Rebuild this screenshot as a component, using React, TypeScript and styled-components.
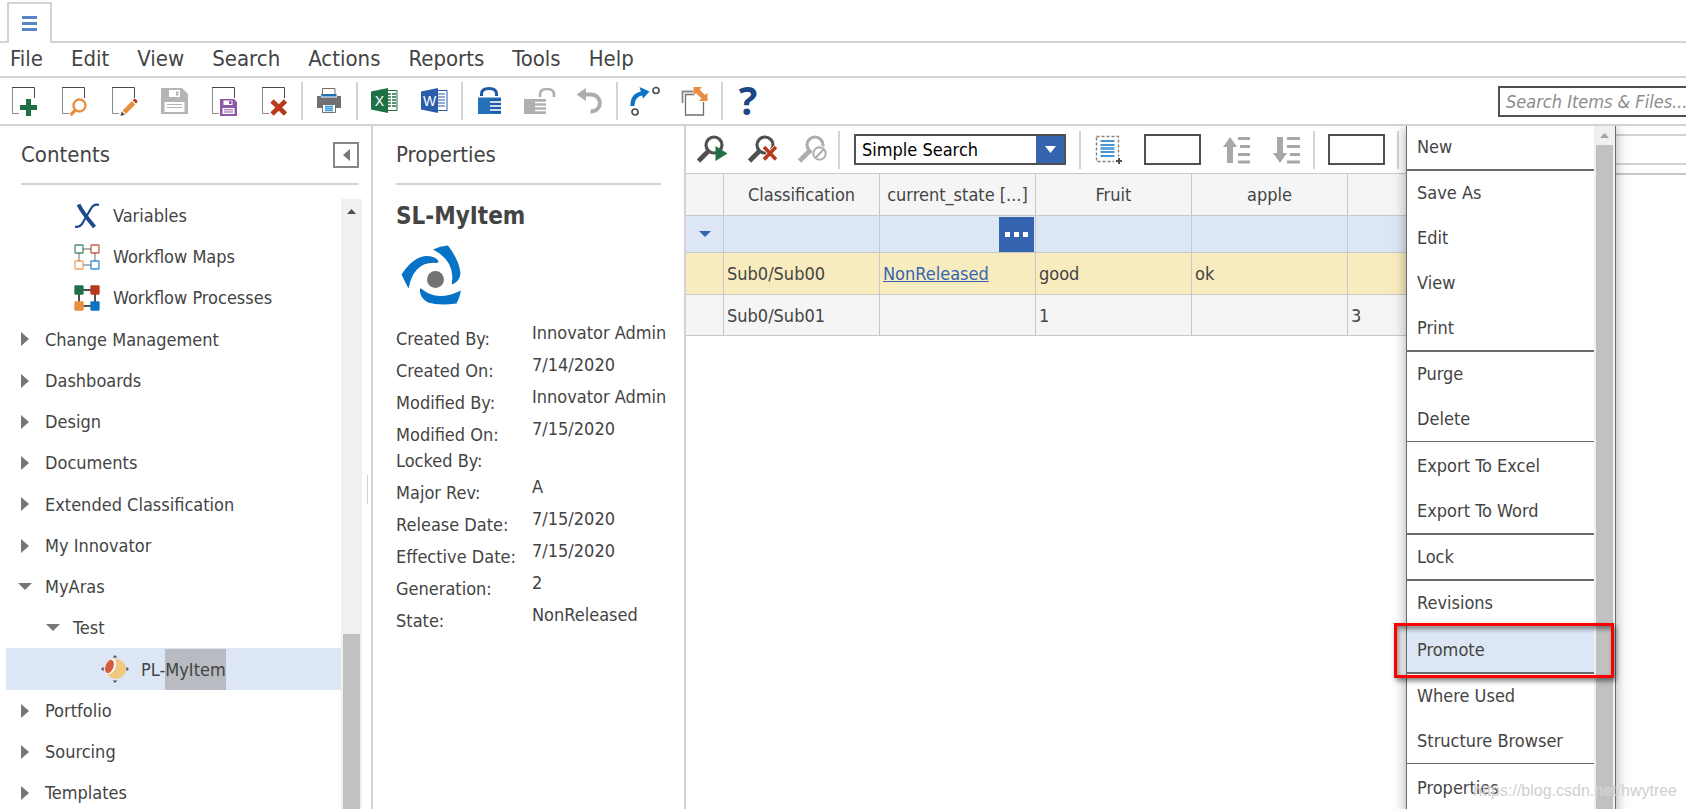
import React from "react";
import styled, { createGlobalStyle } from "styled-components";

const text = "#444444";
const line = "#d3d3d3";
const cellLine = "#c8c8c8";
const blue = "#3565b0";

const GlobalStyle = createGlobalStyle`
  *, *::before, *::after { box-sizing: border-box; }
  html, body { margin: 0; padding: 0; overflow: hidden; }
  body, button, input, select {
    font-family: "DejaVu Sans Condensed", "DejaVu Sans", sans-serif;
    font-size: 18px;
    color: ${text};
  }
  button { border: 0; padding: 0; background: transparent; cursor: pointer; }
  svg { display: block; flex: none; }
`;

const Page = styled.div`
  position: relative;
  display: flex;
  flex-direction: column;
  height: 100vh;
  overflow: hidden;
  background: #fff;
`;

/* ---------- Tab strip, menu bar, main toolbar ---------- */

const TabStrip = styled.div`
  display: flex;
  flex: none;
  height: 43px;
  padding-top: 2px;
`;

const TabEdge = styled.div<{ $grow?: boolean }>`
  flex: ${(p) => (p.$grow ? "1" : "0 0 7px")};
  border-bottom: 2px solid ${line};
`;

const Tab = styled.button`
  display: flex;
  align-items: center;
  justify-content: center;
  width: 45px;
  border: 2px solid ${line};
  border-bottom: 0;
`;

const MenuBar = styled.nav`
  display: flex;
  flex: none;
  height: 35px;
  padding: 0 0 2px;
  border-bottom: 2px solid ${line};
`;

const MenuButton = styled.button`
  padding: 0 18px 0 10px;
  font-size: 22px;
  line-height: 31px;
`;

const Toolbar = styled.div`
  display: flex;
  flex: none;
  align-items: center;
  height: 48px;
  overflow: hidden;
  border-bottom: 2px solid ${line};
`;

const ToolButton = styled.button`
  display: flex;
  flex: none;
  align-items: center;
  justify-content: center;
  width: 50px;
  height: 40px;
`;

const Divider = styled.span`
  flex: none;
  width: 2px;
  height: 38px;
  margin: 0 2px 0 1px;
  background: ${line};
`;

const SearchBox = styled.input`
  flex: none;
  width: 208px;
  height: 31px;
  margin: 0 -20px 0 auto;
  padding: 0 6px;
  border: 2px solid #505050;
  outline: 0;
  font-style: italic;
  background: #fff;
  &::placeholder { color: #8c8c8c; opacity: 1; }
`;

/* ---------- Panels ---------- */

const Main = styled.main`
  position: relative;
  display: flex;
  flex: 1;
  min-height: 0;
  overflow: hidden;
`;

const ContentsPanel = styled.aside`
  display: flex;
  flex: 0 0 373px;
  border-right: 2px solid ${line};
`;

const ContentsBody = styled.div`
  display: flex;
  flex: 1;
  flex-direction: column;
`;

const Splitter = styled.div`
  flex: 0 0 4px;
  padding-top: 349px;
  &::before {
    content: "";
    display: block;
    width: 1px;
    height: 29px;
    background: ${line};
  }
`;

const PanelHeader = styled.header<{ $left: number; $right: number }>`
  display: flex;
  flex: none;
  align-items: center;
  justify-content: space-between;
  height: 59px;
  margin: 0 ${(p) => p.$right}px 0 ${(p) => p.$left}px;
  border-bottom: 2px solid ${line};
`;

const PanelTitle = styled.h2`
  margin: 0;
  font-size: 22px;
  font-weight: 400;
  line-height: 30px;
`;

const CollapseButton = styled.button`
  display: flex;
  align-items: center;
  justify-content: center;
  width: 26px;
  height: 26px;
  border: 2px solid #878787;
`;

const TreeArea = styled.div`
  display: flex;
  flex: 1;
  min-height: 0;
  padding: 0 5px 0 6px;
`;

const Tree = styled.ul`
  flex: 1;
  margin: 10px 0 0;
  padding: 0;
  list-style: none;
`;

const TreeRow = styled.li<{ $depth: number; $selected?: boolean }>`
  display: flex;
  align-items: center;
  gap: 13px;
  height: 41px;
  padding-left: ${(p) => 12 + p.$depth * 28}px;
  line-height: 41px;
  white-space: nowrap;
  background: ${(p) => (p.$selected ? "#dde6f5" : "transparent")};

  &:nth-child(4n) { height: 42px; }
`;

const Toggle = styled.button`
  display: flex;
  flex: none;
  align-items: center;
  justify-content: center;
  width: 14px;
  height: 14px;
`;

const TreeIcon = styled.span`
  display: flex;
  flex: none;
  justify-content: center;
  width: 26px;
`;

const Found = styled.mark`
  display: inline-block;
  height: 41px;
  color: ${text};
  background: #b8bbc2;
`;

const ScrollTrack = styled.div<{ $top?: number }>`
  display: flex;
  flex: 0 0 21px;
  flex-direction: column;
  align-items: center;
  width: 21px;
  margin-top: ${(p) => p.$top ?? 0}px;
  background: #f0f0f0;
`;

const ScrollArrow = styled.span<{ $height: number }>`
  display: flex;
  flex: none;
  align-items: center;
  height: ${(p) => p.$height}px;
`;

const ScrollThumb = styled.span<{ $before?: number }>`
  flex: 1;
  width: 17px;
  margin-top: ${(p) => p.$before ?? 0}px;
  background: #c1c1c1;
`;

const PropertiesPanel = styled.section`
  flex: 0 0 313px;
  border-right: 2px solid ${line};
`;

const ItemTitle = styled.h1`
  margin: 16px 0 0 23px;
  font-size: 24px;
  font-weight: 700;
  line-height: 30px;
`;

const ItemLogo = styled.div`
  padding: 14px 0 15px 28px;
`;

const PropertyList = styled.dl`
  margin: 0 0 0 23px;
  line-height: 26px;
  white-space: nowrap;
`;

const PropertyRow = styled.div<{ $empty: boolean }>`
  display: flex;
  height: ${(p) => (p.$empty ? 26 : 32)}px;
`;

const PropertyName = styled.dt`
  align-self: flex-end;
  width: 136px;
`;

const PropertyValue = styled.dd`
  margin: 0;
`;

/* ---------- Grid area ---------- */

const GridPanel = styled.section`
  flex: 1;
  min-width: 0;
  overflow: hidden;
`;

const GridToolbar = styled.div`
  display: flex;
  align-items: center;
  height: 49px;
  padding-left: 1px;
  border-bottom: 2px solid ${cellLine};
`;

const SelectBox = styled.div`
  display: grid;
  flex: none;
  grid-template-columns: 1fr 28px;
  width: 212px;
  height: 31px;
  margin: 0 12px;
  border: 2px solid #505050;
`;

const SearchSelect = styled.select`
  grid-area: 1 / 1 / 2 / 3;
  appearance: none;
  padding: 0 6px;
  border: 0;
  outline: 0;
  color: #000;
  background: #fff;
`;

const SelectArrow = styled.span`
  display: flex;
  grid-area: 1 / 2 / 2 / 3;
  align-items: center;
  justify-content: center;
  pointer-events: none;
  background: ${blue};
`;

const SmallInput = styled.input`
  flex: none;
  width: 57px;
  height: 31px;
  margin: 0 11px;
  padding: 0 4px;
  border: 2px solid #505050;
  outline: 0;
`;

const ViewBar = styled.div`
  flex: 1;
  height: 31px;
  margin-left: 30px;
  border: solid ${line};
  border-width: 2px 0;
`;

const Grid = styled.table`
  position: relative;
  width: 818px;
  margin-top: -1px;
  table-layout: fixed;
  border-spacing: 0;
  color: ${text};
`;

const HeadCell = styled.th<{ $narrow?: boolean }>`
  width: ${(p) => (p.$narrow ? 38 : 156)}px;
  height: 42px;
  padding: 0;
  border: solid ${cellLine};
  border-width: 0 1px 1px 0;
  font-weight: 400;
  white-space: nowrap;
  background: #f5f5f5;
`;

const rowTones = {
  filter: { height: 37, color: "#dde6f5" },
  active: { height: 42, color: "#f8ecbf" },
  plain: { height: 41, color: "#f5f5f5" },
};

const Row = styled.tr<{ $tone: keyof typeof rowTones }>`
  height: ${(p) => rowTones[p.$tone].height}px;
  background: ${(p) => rowTones[p.$tone].color};
`;

const Cell = styled.td`
  padding: 0 0 0 3px;
  border: solid ${cellLine};
  border-width: 0 1px 1px 0;
`;

const FilterCell = styled.td`
  padding: 0;
  border: solid ${cellLine};
  border-width: 0 1px 1px 0;
`;

const FilterBody = styled.div`
  display: flex;
  height: 35px;
  padding-right: 1px;
`;

const FilterToggle = styled.button`
  display: flex;
  align-items: center;
  justify-content: center;
  width: 100%;
  height: 35px;
`;

const FilterInput = styled.input`
  flex: 1;
  min-width: 0;
  padding: 0 3px;
  border: 0;
  outline: 0;
  background: transparent;
`;

const PickButton = styled.button`
  display: flex;
  align-items: center;
  justify-content: center;
  width: 35px;
  height: 35px;
  background: ${blue};
`;

const StateLink = styled.a`
  color: ${blue};
  text-decoration: underline;
`;

/* ---------- Context menu ---------- */

const ContextMenu = styled.div`
  position: absolute;
  top: -1px;
  bottom: -8px;
  left: 1406px;
  display: flex;
  width: 210px;
  border: 1px solid #6b6b6b;
  background: #fff;
  box-shadow: 0 2px 12px rgba(0, 0, 0, 0.35);
`;

const ContextList = styled.ul`
  flex: 1;
  margin: -2px 0 0;
  padding: 0;
  list-style: none;
`;

const ContextItem = styled.li<{ $active?: boolean }>`
  position: ${(p) => (p.$active ? "relative" : "static")};
  background: ${(p) => (p.$active ? "#dde6f5" : "#fff")};
`;

const ContextButton = styled.button`
  width: 100%;
  padding-left: 10px;
  text-align: left;
  line-height: 45px;
`;

const ContextRule = styled.li<{ $thick?: boolean }>`
  position: relative;
  height: ${(p) => (p.$thick ? 2 : 1)}px;
  margin-bottom: ${(p) => (p.$thick ? -1 : 1)}px;
  background: #6b6b6b;
`;

const RedFrame = styled.span`
  position: absolute;
  z-index: 1;
  top: -4px;
  left: -13px;
  width: 220px;
  height: 55px;
  border: 3px solid #fb0000;
  box-shadow: 2px 3px 5px rgba(0, 0, 0, 0.5), inset 2px 3px 5px rgba(0, 0, 0, 0.45);
  pointer-events: none;
`;

const Watermark = styled.span`
  position: absolute;
  right: 9px;
  bottom: 8px;
  font-family: "Liberation Sans", Arial, sans-serif;
  font-size: 16px;
  line-height: 20px;
  color: rgba(190, 190, 190, 0.75);
  text-shadow: 0 0 1px rgba(255, 255, 255, 0.9);
  pointer-events: none;
`;

/* ---------- Icons ---------- */

const PageShape = () => (
  <g fill="none">
    <path d="M9 28.5H2.5V2" stroke="#8a8a8a" />
    <path d="M2 2.5H24.5V13" stroke="#4a4a4a" />
  </g>
);

const Tool = ({ children }: { children: React.ReactNode }) => (
  <svg width="30" height="32" viewBox="0 0 30 32" aria-hidden="true">
    {children}
  </svg>
);

const NewIcon = () => (
  <Tool>
    <PageShape />
    <path d="M16 14h5v6h6v5h-6v6h-5v-6h-6v-5h6z" fill="#1f7145" />
  </Tool>
);

const FindIcon = () => (
  <Tool>
    <PageShape />
    <circle cx="19.5" cy="20.5" r="6" fill="#fff" stroke="#e88f3f" strokeWidth="2.4" />
    <path d="M15.5 25l-5 5" stroke="#e88f3f" strokeWidth="3.2" />
  </Tool>
);

const EditIcon = () => (
  <Tool>
    <PageShape />
    <path d="M12.5 25.5L22 16l3.4 3.4-9.5 9.5z" fill="#e88f3f" />
    <path d="M22.8 15.2l1-1q1.2-1 2.3.2l.9.9q1 1.1 0 2.2l-1 1.1z" fill="#b8391b" />
    <path d="M11.6 26.4l3.4 3.4-4.6 1.2z" fill="#555" />
  </Tool>
);

const SaveIcon = () => (
  <Tool>
    <path d="M1 3h21l6 6v20H1z" fill="#b5b5b5" />
    <path d="M7 5h13v7H7z" fill="#fff" />
    <path d="M16 6.5h2.5v4H16z" fill="#b5b5b5" />
    <path d="M7 5h2v7H7z" fill="#b5b5b5" />
    <path d="M4.5 17h20v10h-20z" fill="#fff" />
    <path d="M7 19.5h15M7 22.5h15" stroke="#b5b5b5" />
  </Tool>
);

const SaveCloseIcon = () => (
  <Tool>
    <PageShape />
    <path d="M10 14h14l3 3v14H10z" fill="#8e58a8" />
    <path d="M13.5 15.5h9V20h-9z" fill="#fff" />
    <path d="M19 16h2.5v3H19z" fill="#8e58a8" />
    <path d="M12.5 23h12v6h-12z" fill="#fff" />
    <path d="M14 24.8h9M14 27h9" stroke="#8e58a8" />
  </Tool>
);

const DeleteIcon = () => (
  <Tool>
    <PageShape />
    <path d="M12 16l13.5 13M25.5 16L12 29" stroke="#b8391b" strokeWidth="4.6" />
  </Tool>
);

const PrintIcon = () => (
  <Tool>
    <path d="M7.5 9V3.5H20V9" fill="#fff" stroke="#6f6f6f" />
    <path d="M2 11h4V9h15.500v2H26v12H2z" fill="#707070" />
    <path d="M6 10h16v2.500H6z" fill="#fff" />
    <path d="M6.500 9.500h15v2h-15z" fill="#0a73c6" />
    <path d="M7.500 19.500h13v8h-13z" fill="#fff" stroke="#6f6f6f" />
    <path d="M10 21.500h8M10 23.500h8M10 25.500h8" stroke="#3a96da" strokeWidth="1.4" />
  </Tool>
);

const OfficeIcon = ({ letter, color }: { letter: string; color: string }) => (
  <Tool>
    <path d="M18 5.5h9v20h-9" fill="#fff" stroke={color} />
    {letter === "X" ? (
      <path
        d="M18 9h3M22 9h4M18 12h3M22 12h4M18 15h3M22 15h4M18 18h3M22 18h4M18 21h3M22 21h4"
        stroke={color}
        strokeWidth="1.6"
      />
    ) : (
      <path d="M18 9h7M18 12h7M18 15h7M18 18h7M18 21h7" stroke={color} strokeWidth="1.2" />
    )}
    <path d="M1 6.5L18 3v25L1 24.500z" fill={color} />
    <text
      x="9.5"
      y="20.5"
      textAnchor="middle"
      fontFamily="Liberation Sans, sans-serif"
      fontSize="14"
      fill="#fff"
    >
      {letter}
    </text>
  </Tool>
);

const LockIcon = () => (
  <Tool>
    <path d="M6.5 11V9Q6.5 3.500 14 3.500T21.500 9V11" fill="none" stroke="#1f5aa8" strokeWidth="3" />
    <path d="M3 12.500h23V29H3z" fill="#2372ba" />
    <path d="M15 17h11M15 21h11M15 25h11" stroke="#fff" strokeWidth="1.500" />
    <path d="M15 15h11M15 19h11M15 23h11M15 27h11" stroke="#1f5aa8" strokeWidth="2" />
  </Tool>
);

const UnlockIcon = () => (
  <svg width="34" height="32" viewBox="0 0 34 32" aria-hidden="true">
    <path d="M17 12V9.500Q17 4 24 4T31 9.500V12" fill="none" stroke="#b0b0b0" strokeWidth="2.6" />
    <path d="M1 14h22v15H1z" fill="#b0b0b0" />
    <path d="M12 17.500h12M12 21.500h12M12 25.500h12" stroke="#fff" strokeWidth="1.4" />
  </svg>
);

const UndoIcon = () => (
  <Tool>
    <path d="M8 9.5H15C28 9 28 27 15.500 26.500" fill="none" stroke="#adadad" strokeWidth="4" />
    <path d="M1.5 9.5L11 3v13z" fill="#adadad" />
  </Tool>
);

const RouteIcon = () => (
  <Tool>
    <path d="M2.5 21Q2 10 13 8" fill="none" stroke="#0a73c6" strokeWidth="4" />
    <path d="M9.500 2l10 4.500-6.500 7z" fill="#0a73c6" />
    <circle cx="26" cy="5.5" r="3" fill="none" stroke="#505050" strokeWidth="1.7" />
    <circle cx="5" cy="27" r="3" fill="none" stroke="#505050" strokeWidth="1.7" />
  </Tool>
);

const RevisionIcon = () => (
  <Tool>
    <path d="M2.5 18V6.5H13" fill="none" stroke="#8a8a8a" strokeWidth="1.8" />
    <path d="M14 9.5H5.500V30h18V17" fill="none" stroke="#707070" strokeWidth="1.3" />
    <path d="M13.500 2H22l-2.500 2.500L25 10l2.500-2.500V16H19l2.500-2.500L16 8l-2.500 2.500z" fill="#e88f3f" />
  </Tool>
);

const HelpIcon = () => (
  <Tool>
    <text
      x="13"
      y="30"
      textAnchor="middle"
      fontFamily="Open Sans, sans-serif"
      fontSize="39"
      fontWeight="700"
      fill="#1d4684"
    >
      ?
    </text>
  </Tool>
);

const Lens = ({ color }: { color: string }) => (
  <g fill="none" stroke={color}>
    <circle cx="18" cy="11" r="8" strokeWidth="3.2" />
    <path d="M12 17.500L2.500 27" strokeWidth="4.600" />
  </g>
);

const RunSearchIcon = () => (
  <svg width="34" height="32" viewBox="-1 0 34 32" aria-hidden="true">
    <Lens color="#505050" />
    <path d="M19.500 12l12 7.500-12 7.500z" fill="#1f7145" />
  </svg>
);

const ClearSearchIcon = () => (
  <Tool>
    <Lens color="#505050" />
    <path d="M17 13l12 12.500M29 13L17 25.500" stroke="#fff" strokeWidth="5" />
    <path d="M17 13l12 12.500M29 13L17 25.500" stroke="#b8391b" strokeWidth="3.600" />
  </Tool>
);

const StopSearchIcon = () => (
  <Tool>
    <Lens color="#adadad" />
    <circle cx="22.500" cy="19.500" r="8" fill="#fff" />
    <circle cx="22.500" cy="19.500" r="6.200" fill="#fff" stroke="#adadad" strokeWidth="2" />
    <path d="M18.500 24l8-8.500" stroke="#adadad" strokeWidth="2" />
  </Tool>
);

const SelectAllIcon = () => (
  <Tool>
    <path d="M3.5 2.5h22v25h-22z" fill="none" stroke="#808080" strokeWidth="1.4" strokeDasharray="3 2" />
    <path d="M7.500 7h14M7.500 11h14M7.500 18h14M7.500 22h14" stroke="#0a73c6" strokeWidth="1.3" />
    <path d="M7.500 14.500h14" stroke="#5da6df" strokeWidth="3" />
    <path d="M21 22.500h9V32h-9z" fill="#fff" />
    <path d="M26 24v6M23 27h6" stroke="#505050" strokeWidth="2" />
  </Tool>
);

const SortIcon = ({ down }: { down?: boolean }) => (
  <Tool>
    <path
      d={down ? "M1 19h4V3h6v16h4l-7 10z" : "M1 13h4v16h6V13h4L8 3z"}
      fill="#a8a8a8"
    />
    <path
      d={down ? "M15 4.500h13M15 12.500h13M18 20.500h10M15 28h13" : "M16 4.500h12M18 12.500h10M16 20.500h12M16 28h12"}
      stroke="#a8a8a8"
      strokeWidth="3"
    />
  </Tool>
);

const Triangle = ({
  to,
  color,
  width,
  height,
}: {
  to: "up" | "down" | "left" | "right";
  color: string;
  width: number;
  height: number;
}) => (
  <svg width={width} height={height} viewBox="0 0 10 10" preserveAspectRatio="none" aria-hidden="true">
    <path
      d={{ up: "M0 10h10L5 0z", down: "M0 0h10L5 10z", left: "M10 0v10L0 5z", right: "M0 0v10l10-5z" }[to]}
      fill={color}
    />
  </svg>
);

const HamburgerIcon = () => (
  <svg width="15" height="15" viewBox="0 0 15 15" aria-hidden="true">
    <path d="M0 1.5h15M0 7.5h15M0 13.5h15" stroke="#5b84c4" strokeWidth="3" />
  </svg>
);

const DotsIcon = () => (
  <svg width="23" height="5" viewBox="0 0 23 5" aria-hidden="true">
    <path d="M0 0h5v5H0zM9 0h5v5H9zM18 0h5v5h-5z" fill="#fff" />
  </svg>
);

const VariableIcon = () => (
  <svg width="24" height="26" viewBox="0 0 24 26" aria-hidden="true">
    <path d="M3.5 1.5Q7 9 19.5 24" fill="none" stroke="#1d4a8c" strokeWidth="4" />
    <path d="M0 23.5Q4 25 7 21L16 5.5Q19 .5 24 2" fill="none" stroke="#1d4a8c" strokeWidth="2.2" />
  </svg>
);

const WorkflowIcon = ({ solid }: { solid?: boolean }) => {
  const link = solid ? "#505050" : "#9a9a9a";
  const nodes: [number, number, string][] = [
    [1, 1, "#1f7145"],
    [17, 1, "#b8391b"],
    [1, 17, "#e88f3f"],
    [17, 17, "#0a73c6"],
  ];
  return (
    <svg width="26" height="26" viewBox="0 0 26 26" aria-hidden="true">
      <path d="M5 5h16v16H5z" fill="none" stroke={link} strokeWidth={solid ? 2 : 1.4} />
      {nodes.map(([x, y, color]) => (
        <rect
          key={color}
          x={x}
          y={y}
          width="8"
          height="8"
          rx="0.5"
          fill={solid ? color : "#fff"}
          stroke={color}
          strokeWidth="1.3"
          strokeOpacity={solid ? 1 : 0.8}
        />
      ))}
    </svg>
  );
};

const MyItemIcon = () => (
  <svg width="28" height="28" viewBox="0 0 28 28" aria-hidden="true">
    <circle cx="15" cy="14" r="10" fill="#f0c97f" />
    <ellipse cx="9.5" cy="11.5" rx="5" ry="8" transform="rotate(24 9.5 11.5)" fill="#fff" />
    <ellipse cx="8.5" cy="11.5" rx="4" ry="7" transform="rotate(20 8.5 11.5)" fill="#d65a3c" />
    <path
      d="M14 0l2.3 2.6h-4.6zM14 28l2.3-2.6h-4.6zM0 14l2.6-2.3v4.6zM28 14l-2.6-2.3v4.6z"
      fill="#505050"
    />
  </svg>
);

const ApertureLogo = () => (
  <svg width="60" height="60" viewBox="0 0 60 60" role="img" aria-label="SL-MyItem">
    <g fill="#0773c7">
      <path d="M32 4.5Q39 1 47 .5Q58 15 59.5 28Q59 36 51.5 39.5Q50.5 39 51 37Q54 16 32 4.5z" />
      <path d="M.5 29.5Q12 12 25 11Q34 11 37.5 16Q37.5 18 35.5 18Q13 16 7.5 43.5Q4 37 .5 29.5z" />
      <path d="M19 43.5Q20 43 21.5 44.5Q36 57 60 45.5Q59 52 55.5 58.5Q38 61 27 57.5Q18 53 19 43.5z" />
    </g>
    <circle cx="34.5" cy="34.5" r="8.5" fill="#737373" />
  </svg>
);

/* ---------- Data ---------- */

const menus = ["File", "Edit", "View", "Search", "Actions", "Reports", "Tools", "Help"];

const toolGroups: [string, React.ReactNode][][] = [
  [
    ["New", <NewIcon />],
    ["Find", <FindIcon />],
    ["Edit", <EditIcon />],
    ["Save", <SaveIcon />],
    ["Save and close", <SaveCloseIcon />],
    ["Delete", <DeleteIcon />],
  ],
  [["Print", <PrintIcon />]],
  [
    ["Export to Excel", <OfficeIcon letter="X" color="#1f7145" />],
    ["Export to Word", <OfficeIcon letter="W" color="#2a5caa" />],
  ],
  [
    ["Lock", <LockIcon />],
    ["Unlock", <UnlockIcon />],
    ["Undo", <UndoIcon />],
  ],
  [
    ["Promote", <RouteIcon />],
    ["Revisions", <RevisionIcon />],
  ],
  [["Help", <HelpIcon />]],
];

type Node = {
  label: string;
  depth: number;
  open?: boolean;
  icon?: React.ReactNode;
  found?: string;
};

const tree: Node[] = [
  { label: "Variables", depth: 2, icon: <VariableIcon /> },
  { label: "Workflow Maps", depth: 2, icon: <WorkflowIcon /> },
  { label: "Workflow Processes", depth: 2, icon: <WorkflowIcon solid /> },
  { label: "Change Management", depth: 0 },
  { label: "Dashboards", depth: 0 },
  { label: "Design", depth: 0 },
  { label: "Documents", depth: 0 },
  { label: "Extended Classification", depth: 0 },
  { label: "My Innovator", depth: 0 },
  { label: "MyAras", depth: 0, open: true },
  { label: "Test", depth: 1, open: true },
  { label: "PL-", depth: 3, icon: <MyItemIcon />, found: "MyItem" },
  { label: "Portfolio", depth: 0 },
  { label: "Sourcing", depth: 0 },
  { label: "Templates", depth: 0 },
];

const properties: [string, string][] = [
  ["Created By:", "Innovator Admin"],
  ["Created On:", "7/14/2020"],
  ["Modified By:", "Innovator Admin"],
  ["Modified On:", "7/15/2020"],
  ["Locked By:", ""],
  ["Major Rev:", "A"],
  ["Release Date:", "7/15/2020"],
  ["Effective Date:", "7/15/2020"],
  ["Generation:", "2"],
  ["State:", "NonReleased"],
];

const columns = ["Classification", "current_state [...]", "Fruit", "apple", ""];

const contextItems: { label: string; rule?: "thin" | "thick" }[] = [
  { label: "New", rule: "thick" },
  { label: "Save As" },
  { label: "Edit" },
  { label: "View" },
  { label: "Print", rule: "thick" },
  { label: "Purge" },
  { label: "Delete", rule: "thin" },
  { label: "Export To Excel" },
  { label: "Export To Word", rule: "thick" },
  { label: "Lock", rule: "thick" },
  { label: "Revisions", rule: "thin" },
  { label: "Promote", rule: "thick" },
  { label: "Where Used" },
  { label: "Structure Browser", rule: "thin" },
  { label: "Properties" },
];

export default function App() {
  return (
    <Page>
      <GlobalStyle />
      <TabStrip>
        <TabEdge />
        <Tab aria-label="Contents tab">
          <HamburgerIcon />
        </Tab>
        <TabEdge $grow />
      </TabStrip>
      <MenuBar>
        {menus.map((name) => (
          <MenuButton key={name}>{name}</MenuButton>
        ))}
      </MenuBar>
      <Toolbar>
        {toolGroups.map((group, i) => (
          <React.Fragment key={i}>
            {i > 0 && <Divider />}
            {group.map(([label, icon]) => (
              <ToolButton key={label} aria-label={label}>
                {icon}
              </ToolButton>
            ))}
          </React.Fragment>
        ))}
        <SearchBox type="text" aria-label="Search" placeholder="Search Items & Files..." />
      </Toolbar>

      <Main>
        <ContentsPanel>
          <ContentsBody>
            <PanelHeader $left={21} $right={8}>
              <PanelTitle>Contents</PanelTitle>
              <CollapseButton aria-label="Collapse contents">
                <Triangle to="left" color="#777" width={7} height={12} />
              </CollapseButton>
            </PanelHeader>
            <TreeArea>
              <Tree>
                {tree.map((node) => (
                  <TreeRow key={node.label} $depth={node.depth} $selected={!!node.found}>
                    {node.icon ? (
                      <TreeIcon>{node.icon}</TreeIcon>
                    ) : (
                      <Toggle aria-label={`Toggle ${node.label}`}>
                        {node.open ? (
                          <Triangle to="down" color="#777" width={14} height={7} />
                        ) : (
                          <Triangle to="right" color="#777" width={8} height={14} />
                        )}
                      </Toggle>
                    )}
                    <span>
                      {node.label}
                      {node.found && <Found>{node.found}</Found>}
                    </span>
                  </TreeRow>
                ))}
              </Tree>
              <ScrollTrack $top={14}>
                <ScrollArrow $height={24}>
                  <Triangle to="up" color="#505050" width={9} height={5} />
                </ScrollArrow>
                <ScrollThumb $before={411} />
              </ScrollTrack>
            </TreeArea>
          </ContentsBody>
          <Splitter />
        </ContentsPanel>

        <PropertiesPanel>
          <PanelHeader $left={23} $right={23}>
            <PanelTitle>Properties</PanelTitle>
          </PanelHeader>
          <ItemTitle>SL-MyItem</ItemTitle>
          <ItemLogo>
            <ApertureLogo />
          </ItemLogo>
          <PropertyList>
            {properties.map(([name, value]) => (
              <PropertyRow key={name} $empty={!value}>
                <PropertyName>{name}</PropertyName>
                <PropertyValue>{value}</PropertyValue>
              </PropertyRow>
            ))}
          </PropertyList>
        </PropertiesPanel>

        <GridPanel>
          <GridToolbar>
            <ToolButton aria-label="Run search">
              <RunSearchIcon />
            </ToolButton>
            <ToolButton aria-label="Clear search">
              <ClearSearchIcon />
            </ToolButton>
            <ToolButton aria-label="Stop search">
              <StopSearchIcon />
            </ToolButton>
            <Divider />
            <SelectBox>
              <SearchSelect aria-label="Search mode">
                <option>Simple Search</option>
              </SearchSelect>
              <SelectArrow>
                <Triangle to="down" color="#fff" width={11} height={7} />
              </SelectArrow>
            </SelectBox>
            <Divider />
            <ToolButton aria-label="Select all">
              <SelectAllIcon />
            </ToolButton>
            <SmallInput type="text" aria-label="Page size" />
            <ToolButton aria-label="Previous page">
              <SortIcon />
            </ToolButton>
            <ToolButton aria-label="Next page">
              <SortIcon down />
            </ToolButton>
            <Divider />
            <SmallInput type="text" aria-label="Page number" />
            <Divider />
            <ViewBar />
          </GridToolbar>
          <Grid>
            <thead>
              <tr>
                <HeadCell $narrow />
                {columns.map((name, i) => (
                  <HeadCell key={i}>{name}</HeadCell>
                ))}
              </tr>
            </thead>
            <tbody>
              <Row $tone="filter">
                <FilterCell>
                  <FilterToggle aria-label="Filter row">
                    <Triangle to="down" color={blue} width={12} height={6} />
                  </FilterToggle>
                </FilterCell>
                {columns.map((name, i) => (
                  <FilterCell key={i}>
                    <FilterBody>
                      <FilterInput type="text" aria-label={`Filter ${name || "column 5"}`} />
                      {i === 1 && (
                        <PickButton aria-label="Pick state">
                          <DotsIcon />
                        </PickButton>
                      )}
                    </FilterBody>
                  </FilterCell>
                ))}
              </Row>
              <Row $tone="active">
                <Cell />
                <Cell>Sub0/Sub00</Cell>
                <Cell>
                  <StateLink href="#state">NonReleased</StateLink>
                </Cell>
                <Cell>good</Cell>
                <Cell>ok</Cell>
                <Cell />
              </Row>
              <Row $tone="plain">
                <Cell />
                <Cell>Sub0/Sub01</Cell>
                <Cell />
                <Cell>1</Cell>
                <Cell />
                <Cell>3</Cell>
              </Row>
            </tbody>
          </Grid>
        </GridPanel>

        <ContextMenu>
          <ContextList>
            {contextItems.map(({ label, rule }) => (
              <React.Fragment key={label}>
                <ContextItem $active={label === "Promote"}>
                  <ContextButton>{label}</ContextButton>
                  {label === "Promote" && <RedFrame />}
                </ContextItem>
                {rule && <ContextRule $thick={rule === "thick"} />}
              </React.Fragment>
            ))}
          </ContextList>
          <ScrollTrack>
            <ScrollArrow $height={19}>
              <Triangle to="up" color="#a3a3a3" width={9} height={5} />
            </ScrollArrow>
            <ScrollThumb />
          </ScrollTrack>
        </ContextMenu>
      </Main>
      <Watermark>https://blog.csdn.net/hwytree</Watermark>
    </Page>
  );
}
